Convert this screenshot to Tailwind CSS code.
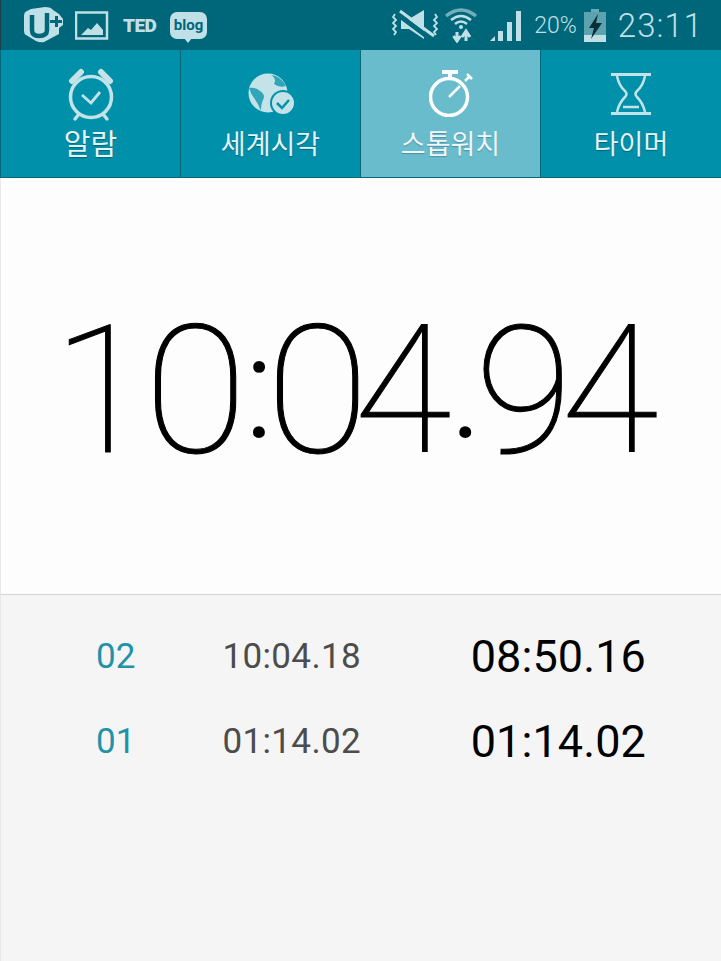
<!DOCTYPE html>
<html lang="ko">
<head>
<meta charset="utf-8">
<script src="https://cdn.jsdelivr.net/npm/@tailwindcss/browser@4"></script>
</head>
<body class="m-0 w-[721px] h-[961px] overflow-hidden bg-[#f5f5f5] font-['Roboto','Noto_Sans_CJK_KR',sans-serif]">
<div class="flex h-full w-full flex-col">

<!-- status bar -->
<header class="flex h-[50px] items-center border-l border-[#1f3f47] bg-[#00677a] text-[#bfe0e6]">
  <div class="ml-[22px] flex items-center">
    <svg width="41" height="36" viewBox="0 0 41 36" fill="#bfe0e6"><path d="M8 2 L22 0 Q28 0 30 3 L36 7 L40 12 V18 L36 21 V27 L21 35 Q17 36 13 34 L3 28 Q1 27 1 24 V9 Q1 5 4 4 Z"/><path d="M9 8 V23 Q9 29 16 29 Q24 29 24 23 V6" fill="none" stroke="#00677a" stroke-width="4.500"/><path d="M27 13 H32 V9 H35 V13 H39 V16 H35 V20 H32 V16 H27 Z" fill="#00677a"/></svg>
    <svg class="ml-[11px]" width="34" height="29" viewBox="0 0 34 29"><rect x="1" y="1.500" width="31" height="26" fill="none" stroke="#bfe0e6" stroke-width="2.500"/><path d="M6 24 L13 17 L16 19 L22 12 L28 19 V24 Z" fill="#bfe0e6"/></svg>
    <span class="ml-[14px] w-[36px] text-[19px] leading-none font-black tracking-[-0.5px]">TED</span>
    <div class="relative ml-[11px] flex h-[27px] w-[37px] items-center justify-center rounded-[7px] bg-[#bfe0e6] text-[15px] font-bold leading-none text-[#00677a]">blog
      <span class="absolute -bottom-[4px] left-[14px] h-0 w-0 border-x-[4px] border-t-[5px] border-x-transparent border-t-[#bfe0e6]"></span>
    </div>
  </div>
  <div class="ml-auto flex items-center">
    <svg width="46" height="32" viewBox="0 0 46 32" fill="none" stroke="#bfe0e6"><path d="M3 5 l-2 3 3 3 -3 3 3 3 -3 3 3 3 -2 3 M43 5 l2 3 -3 3 3 3 -3 3 3 3 -3 3 2 3" stroke-width="1.800"/><path d="M9 10 H17 L32 1 V30 L17 20 H9 Z" fill="#bfe0e6" stroke="none"/><path d="M8 7 L40 31" stroke="#00677a" stroke-width="5"/><path d="M8 2 L42 27" stroke-width="3"/></svg>
    <svg class="ml-[6px]" width="34" height="36" viewBox="0 0 34 36" fill="none" stroke="#bfe0e6"><path d="M2 9 Q17 -3 32 9" stroke-width="3.500" opacity=".6"/><path d="M7 13 Q17 5 27 13" stroke-width="2.500"/><path d="M11 17 Q17 12 23 17" stroke-width="2.500"/><circle cx="17" cy="20" r="2" fill="#bfe0e6" stroke="none"/><path d="M13 25 V33 M9.500 29 L13 34 L16.500 29 M22 34 V26 M18 30 L22 24 L26 30" stroke-width="3"/></svg>
    <svg class="ml-[11px]" width="34" height="34" viewBox="0 0 34 34" fill="#bfe0e6"><path d="M1 33 L6 28 V33 Z"/><rect x="9" y="23" width="5" height="10"/><rect x="18" y="14" width="5" height="19"/><rect x="27" y="3" width="5" height="30"/></svg>
    <span class="ml-[11px] text-[23px] leading-none font-light">20%</span>
    <svg class="ml-[7px]" width="22" height="33" viewBox="0 0 22 33"><rect x="7" y="0" width="8" height="3" fill="#6aa9b5"/><rect x="0" y="3" width="22" height="30" fill="#5da2af"/><rect x="0" y="26" width="22" height="7" fill="#bfe0e6"/><path d="M14 5 L5 19 H10 L7 30 L18 14 H12 Z" fill="#062f38"/></svg>
    <span class="ml-[12px] mr-[18px] text-[33px] leading-none font-light tracking-[1px]">23:11</span>
  </div>
</header>

<!-- tabs -->
<nav class="grid h-[128px] grid-cols-[180px_180px_180px_180px] border-b border-l border-[#05677a] bg-[#0090aa] text-[#e4f3f6]">
  <div class="flex flex-col items-center border-r border-[#05677a]">
    <svg class="mt-[18px] h-[54px] w-[48px]" viewBox="0 0 48 54" fill="none" stroke="#c3e3e9" stroke-linecap="round"><path d="M5 13 L14 4 M43 13 L34 4" stroke-width="6"/><circle cx="24" cy="29" r="20.500" stroke-width="3.500"/><path d="M15 27 L24 35 L33 24" stroke-width="2.800" stroke-linecap="butt"/><path d="M12 46 L8 51 M36 46 L40 51" stroke-width="3.500"/></svg>
    <span class="mt-[5px] text-[29px] leading-[36px] [text-shadow:0_1px_1px_#00667a]">알람</span>
  </div>
  <div class="flex flex-col items-center border-r border-[#05677a]">
    <svg class="mt-[23px] h-[44px] w-[46px]" viewBox="0 0 46 44"><circle cx="20" cy="20" r="19.500" fill="#c3e3e9"/><path d="M1 15 Q8 14 12 18 Q18 22 15 27 Q13 31 13 38 Q10 30 6 25 Q3 21 1 15 Z M23 2 Q29 6 26 11 Q31 15 38 13 Q33 3 23 2 Z" fill="#0090aa" opacity=".75"/><circle cx="35" cy="30" r="13" fill="#0090aa"/><circle cx="35" cy="30" r="11" fill="#c3e3e9"/><path d="M29 30 L34 35 L41 27" fill="none" stroke="#0090aa" stroke-width="2.500"/></svg>
    <span class="mt-[10px] text-[27px] leading-[36px] [text-shadow:0_1px_1px_#00667a]">세계시각</span>
  </div>
  <div class="flex flex-col items-center border-r border-[#05677a] bg-[#69bccc] text-white">
    <svg class="mt-[19px] h-[48px] w-[44px]" viewBox="0 0 44 48" fill="none" stroke="#fff"><path d="M13 3 H29 M21 3 V8" stroke-width="4"/><path d="M36 12 L41 7 M38 5 L43 10" stroke-width="2.500"/><circle cx="20" cy="28" r="18.500" stroke-width="3.500"/><path d="M20 28 L31 17" stroke-width="2.500"/></svg>
    <span class="mt-[10px] text-[27px] leading-[36px] text-[#eef8fa] [text-shadow:0_1px_1px_#4d8fa0]">스톱워치</span>
  </div>
  <div class="flex flex-col items-center">
    <svg class="mt-[21px] h-[46px] w-[40px]" viewBox="0 0 40 46" fill="none" stroke="#c3e3e9"><path d="M0 2 H40 V5 H0 Z M0 41 H40 V44 H0 Z" fill="#c3e3e9" stroke="none"/><path d="M6 5 Q8 15 14 20 Q17 23 14 26 Q8 32 6 41 M34 5 Q32 15 26 20 Q23 23 26 26 Q32 32 34 41" stroke-width="2.500"/><path d="M12 36 H28" stroke-width="2.500"/></svg>
    <span class="mt-[10px] text-[27px] leading-[36px] [text-shadow:0_1px_1px_#00667a]">타이머</span>
  </div>
</nav>

<!-- main clock -->
<main class="relative h-[416px] border-l border-[#e8e8e8] bg-[#fdfdfd] text-black">
  <div class="absolute left-[52px] top-[124px] flex items-start text-[178px] leading-[178px] font-thin [-webkit-text-stroke:1px_black]">
    <span class="w-[91px]">1</span>
    <span class="w-[100px] origin-left scale-x-[1.06]">0</span>
    <span class="mt-[14px] w-[22px] text-[144px] leading-[144px] font-light [-webkit-text-stroke:0]">:</span>
    <span class="w-[88px] origin-left scale-x-[1.06]">0</span>
    <span class="w-[95px]">4</span>
    <span class="mt-[14px] w-[26px] text-[144px] leading-[144px] font-light [-webkit-text-stroke:0]">.</span>
    <span class="w-[86px]">9</span>
    <span class="w-[90px]">4</span>
  </div>
</main>

<!-- laps -->
<section class="flex-1 border-t border-l border-t-[#d2d2d2] border-l-[#e8e8e8] bg-[#f5f5f5] pt-[40px] text-[35px]">
  <div class="flex h-[85px] items-start">
    <span class="ml-[95px] w-[60px] leading-[44px] text-[#1f93a8]">02</span>
    <span class="w-[205px] text-right leading-[44px] tracking-[0.35px] text-[#4c4c4c]">10:04.18</span>
    <span class="w-[285px] text-right text-[45px] leading-[44px] tracking-[0.1px] text-black">08:50.16</span>
  </div>
  <div class="flex h-[85px] items-start">
    <span class="ml-[95px] w-[60px] leading-[44px] text-[#1f93a8]">01</span>
    <span class="w-[205px] text-right leading-[44px] tracking-[0.35px] text-[#4c4c4c]">01:14.02</span>
    <span class="w-[285px] text-right text-[45px] leading-[44px] tracking-[0.1px] text-black">01:14.02</span>
  </div>
</section>
</div>
</body>
</html>
